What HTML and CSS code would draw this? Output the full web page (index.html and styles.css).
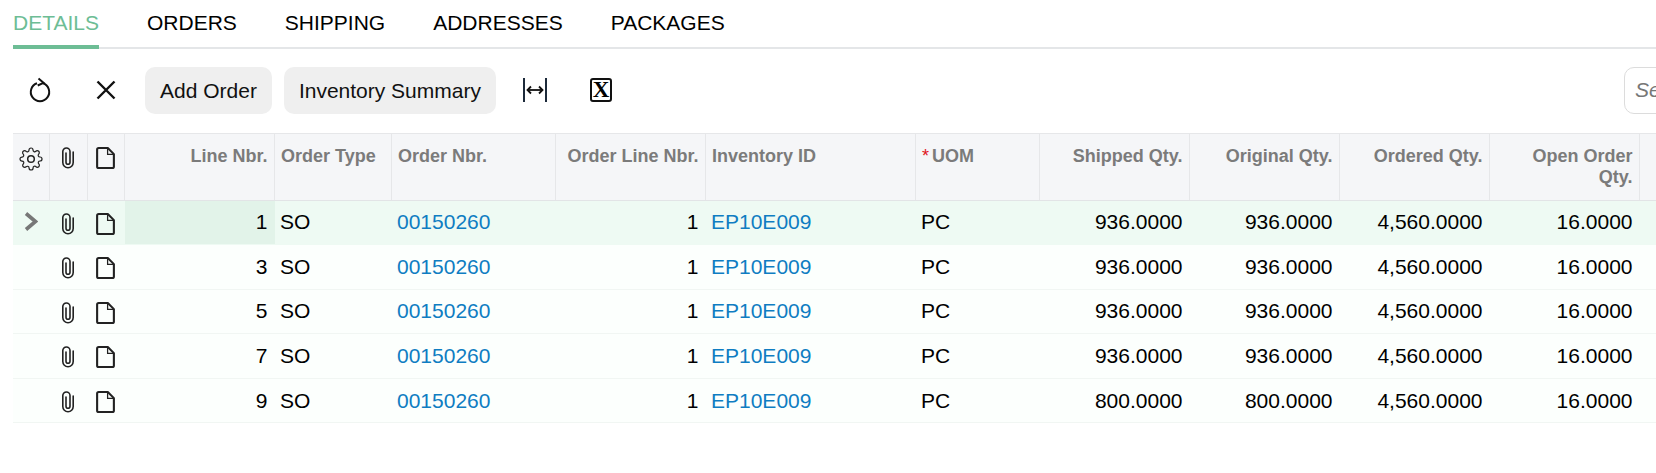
FILE: index.html
```html
<!DOCTYPE html>
<html lang="en">
<head>
  <meta charset="UTF-8">
  <title>Shipment Details</title>
  <link rel="stylesheet" href="styles.css">
</head>
<body>
  <svg class="icon-defs" xmlns="http://www.w3.org/2000/svg">
    <symbol id="i-clip" viewBox="0 0 14 22">
      <path d="M5 6v9.200a2 2 0 0 0 4 0V4.600a3.600 3.600 0 0 0-7.200 0v11a5.200 5.200 0 0 0 10.400 0V5" fill="none" stroke="currentColor" stroke-width="1.600" stroke-linecap="round"/>
    </symbol>
    <symbol id="i-file" viewBox="0 0 18 21">
      <path d="M2.500 1h8.700L17 6.800v11.700a1.500 1.500 0 0 1-1.500 1.500h-13A1.500 1.500 0 0 1 1 18.500V2.500A1.500 1.500 0 0 1 2.500 1z" fill="none" stroke="currentColor" stroke-width="2" stroke-linejoin="round"/>
      <path d="M11 1.500v5.500h5.500" fill="none" stroke="currentColor" stroke-width="1.200"/>
    </symbol>
    <symbol id="i-gear" viewBox="0 0 24 24">
      <circle cx="12" cy="12" r="3.300" fill="none" stroke="currentColor" stroke-width="1.500"/>
      <path d="M19.400 15a1.650 1.650 0 0 0 .33 1.820l.06.06a2 2 0 0 1 0 2.830 2 2 0 0 1-2.830 0l-.06-.06a1.650 1.650 0 0 0-1.820-.33 1.650 1.650 0 0 0-1 1.510V21a2 2 0 0 1-2 2 2 2 0 0 1-2-2v-.09A1.650 1.650 0 0 0 9 19.400a1.650 1.650 0 0 0-1.820.33l-.06.06a2 2 0 0 1-2.830 0 2 2 0 0 1 0-2.830l.06-.06a1.650 1.650 0 0 0 .33-1.820 1.650 1.650 0 0 0-1.510-1H3a2 2 0 0 1-2-2 2 2 0 0 1 2-2h.09A1.650 1.650 0 0 0 4.600 9a1.650 1.650 0 0 0-.33-1.820l-.06-.06a2 2 0 0 1 0-2.830 2 2 0 0 1 2.830 0l.06.06a1.650 1.650 0 0 0 1.820.33H9a1.650 1.650 0 0 0 1-1.510V3a2 2 0 0 1 2-2 2 2 0 0 1 2 2v.09a1.650 1.650 0 0 0 1 1.510 1.650 1.650 0 0 0 1.820-.33l.06-.06a2 2 0 0 1 2.830 0 2 2 0 0 1 0 2.830l-.06.06a1.650 1.650 0 0 0-.33 1.820V9a1.650 1.650 0 0 0 1.510 1H21a2 2 0 0 1 2 2 2 2 0 0 1-2 2h-.09a1.650 1.650 0 0 0-1.510 1z" fill="none" stroke="currentColor" stroke-width="1.200"/>
    </symbol>
  </svg>

  <div class="tabs">
    <div class="tab active">DETAILS</div>
    <div class="tab">ORDERS</div>
    <div class="tab">SHIPPING</div>
    <div class="tab">ADDRESSES</div>
    <div class="tab">PACKAGES</div>
  </div>

  <div class="toolbar">
    <button class="tool-icon">
      <svg width="24" height="26" viewBox="0 0 24 26"><path d="M9 6.300a9.200 9.200 0 1 0 6 0" fill="none" stroke="#111" stroke-width="2"/><path d="M10.500 1.500l5 4.300-5.800 2.700" fill="none" stroke="#111" stroke-width="2"/></svg>
    </button>
    <button class="tool-icon">
      <svg width="20" height="20" viewBox="0 0 20 20"><path d="M1.500 1.500l17 17M18.500 1.500l-17 17" stroke="#111" stroke-width="2.400"/></svg>
    </button>
    <button class="tool-btn">Add Order</button>
    <button class="tool-btn">Inventory Summary</button>
    <button class="tool-icon">
      <svg width="26" height="26" viewBox="0 0 26 26"><path d="M2 1v24M24 1v24" stroke="#1c2a3a" stroke-width="2"/><path d="M6 13h14" stroke="#111" stroke-width="1.800"/><path d="M9 9.500L5.500 13 9 16.500M17 9.500l3.500 3.500-3.500 3.500" fill="none" stroke="#111" stroke-width="1.800"/></svg>
    </button>
    <button class="tool-icon"><span class="excel-mark">X</span></button>
    <input class="search" type="text" placeholder="Search">
  </div>

  <table class="grid">
    <colgroup>
      <col class="c-icon1"><col class="c-icon2"><col class="c-icon3">
      <col class="c-150"><col class="c-type"><col class="c-nbr"><col class="c-150">
      <col class="c-inv"><col class="c-uom"><col class="c-150"><col class="c-150"><col class="c-150"><col class="c-150"><col class="c-end">
    </colgroup>
    <thead>
      <tr>
        <th class="ic"><svg class="gear"><use href="#i-gear"/></svg></th>
        <th class="ic"><svg class="clip"><use href="#i-clip"/></svg></th>
        <th class="ic"><svg class="file"><use href="#i-file"/></svg></th>
        <th class="num">Line Nbr.</th>
        <th>Order Type</th>
        <th>Order Nbr.</th>
        <th class="num">Order Line Nbr.</th>
        <th>Inventory ID</th>
        <th><span class="req">*</span>UOM</th>
        <th class="num">Shipped Qty.</th>
        <th class="num">Original Qty.</th>
        <th class="num">Ordered Qty.</th>
        <th class="num">Open Order Qty.</th>
        <th></th>
      </tr>
    </thead>
    <tbody>
      <tr class="selected">
        <td class="ic"><svg class="chevron" viewBox="0 0 14 20"><path d="M2 2l9.500 8L2 18" fill="none" stroke="#777" stroke-width="3.600"/></svg></td>
        <td class="ic"><svg class="clip"><use href="#i-clip"/></svg></td>
        <td class="ic"><svg class="file"><use href="#i-file"/></svg></td>
        <td class="num active-cell">1</td><td>SO</td><td><a>00150260</a></td><td class="num">1</td><td><a>EP10E009</a></td><td>PC</td>
        <td class="num">936.0000</td><td class="num">936.0000</td><td class="num">4,560.0000</td><td class="num">16.0000</td><td></td>
      </tr>
      <tr>
        <td class="ic"></td>
        <td class="ic"><svg class="clip"><use href="#i-clip"/></svg></td>
        <td class="ic"><svg class="file"><use href="#i-file"/></svg></td>
        <td class="num">3</td><td>SO</td><td><a>00150260</a></td><td class="num">1</td><td><a>EP10E009</a></td><td>PC</td>
        <td class="num">936.0000</td><td class="num">936.0000</td><td class="num">4,560.0000</td><td class="num">16.0000</td><td></td>
      </tr>
      <tr>
        <td class="ic"></td>
        <td class="ic"><svg class="clip"><use href="#i-clip"/></svg></td>
        <td class="ic"><svg class="file"><use href="#i-file"/></svg></td>
        <td class="num">5</td><td>SO</td><td><a>00150260</a></td><td class="num">1</td><td><a>EP10E009</a></td><td>PC</td>
        <td class="num">936.0000</td><td class="num">936.0000</td><td class="num">4,560.0000</td><td class="num">16.0000</td><td></td>
      </tr>
      <tr>
        <td class="ic"></td>
        <td class="ic"><svg class="clip"><use href="#i-clip"/></svg></td>
        <td class="ic"><svg class="file"><use href="#i-file"/></svg></td>
        <td class="num">7</td><td>SO</td><td><a>00150260</a></td><td class="num">1</td><td><a>EP10E009</a></td><td>PC</td>
        <td class="num">936.0000</td><td class="num">936.0000</td><td class="num">4,560.0000</td><td class="num">16.0000</td><td></td>
      </tr>
      <tr>
        <td class="ic"></td>
        <td class="ic"><svg class="clip"><use href="#i-clip"/></svg></td>
        <td class="ic"><svg class="file"><use href="#i-file"/></svg></td>
        <td class="num">9</td><td>SO</td><td><a>00150260</a></td><td class="num">1</td><td><a>EP10E009</a></td><td>PC</td>
        <td class="num">800.0000</td><td class="num">800.0000</td><td class="num">4,560.0000</td><td class="num">16.0000</td><td></td>
      </tr>
    </tbody>
  </table>
</body>
</html>
```

FILE: styles.css
```css
html, body {
  margin: 0;
  padding: 0;
  background: #fff;
  overflow: hidden;
}

body {
  height: 473px;
  font-family: "Liberation Sans", Arial, sans-serif;
  font-size: 21px;
  color: #000;
}

.icon-defs {
  display: none;
}

.tabs {
  display: flex;
  gap: 48px;
  height: 47px;
  margin-left: 13px;
  border-bottom: 2px solid #e4e6e8;
}

.tab {
  height: 49px;
  line-height: 46px;
  box-sizing: border-box;
  white-space: nowrap;
}

.tab.active {
  color: #6dbd95;
  border-bottom: 4px solid #6dbd95;
  border-radius: 3px 3px 0 0;
}

.toolbar {
  display: flex;
  align-items: center;
  gap: 12px;
  padding: 17.500px 0 0 13px;
  height: 47.500px;
  overflow: hidden;
}

.tool-icon {
  flex: none;
  display: flex;
  align-items: center;
  justify-content: center;
  width: 54px;
  height: 47px;
  padding: 0;
  border: none;
  background: none;
}

.tool-btn {
  flex: none;
  height: 47.500px;
  padding: 2px 15px 0;
  border: none;
  border-radius: 10px;
  background: #efefef;
  font-family: inherit;
  font-size: 21px;
  color: #111;
}

.excel-mark {
  display: block;
  box-sizing: border-box;
  width: 22px;
  height: 24px;
  border: 2px solid #111;
  border-radius: 3px;
  font-family: "Liberation Serif", serif;
  font-weight: bold;
  font-size: 23px;
  line-height: 20px;
  text-align: center;
  color: #000;
}

.search {
  flex: none;
  box-sizing: border-box;
  width: 240px;
  height: 47.500px;
  margin-left: 984px;
  padding: 0 10px;
  border: 1px solid #dcdcdc;
  border-radius: 10px;
  font-family: inherit;
  font-size: 21px;
}

.search::placeholder {
  color: #777;
  font-style: italic;
}

.grid {
  table-layout: fixed;
  width: 1643px;
  margin: 18.500px 0 0 13px;
  border-collapse: collapse;
}

.c-icon1 { width: 36.500px; }
.c-icon2 { width: 38px; }
.c-icon3 { width: 37px; }
.c-150 { width: 150px; }
.c-type { width: 117px; }
.c-nbr { width: 164px; }
.c-inv { width: 210px; }
.c-uom { width: 124px; }
.c-end { width: 16.500px; }

th {
  height: 67px;
  box-sizing: border-box;
  padding: 12px 6.500px 0 6px;
  vertical-align: top;
  text-align: left;
  background: #f5f6f8;
  border-top: 1px solid #e6e7e9;
  border-bottom: 1px solid #e2e4e6;
  border-right: 1px solid #e6e7e9;
  font-size: 18px;
  line-height: 21px;
  color: #7b7b7b;
}

th.ic {
  padding: 13px 0 0;
  text-align: center;
  color: #222;
}

td {
  height: 44.600px;
  box-sizing: border-box;
  padding: 0 7px 0 5.500px;
  background: #fcfffd;
  border-bottom: 1px solid #f1f6f3;
  white-space: nowrap;
}

td.ic {
  padding: 0;
  text-align: center;
  color: #222;
}

.num {
  text-align: right;
}

th.num {
  padding-left: 8px;
  text-align: right;
}

.selected td {
  background: #eefaf3;
  border-bottom-color: #eefaf3;
}

.selected td.active-cell {
  background: #e2f3e9;
}

a {
  color: #0f7dc2;
}

.req {
  margin-right: 3px;
  color: #e0141c;
  font-weight: normal;
}

svg {
  vertical-align: middle;
}

.gear {
  width: 24px;
  height: 24px;
}

.clip {
  width: 14px;
  height: 22px;
  margin-right: 2px;
}

.file {
  width: 19px;
  height: 22px;
  margin-right: 2px;
}

.chevron {
  width: 14px;
  height: 21px;
  margin-bottom: 3px;
}
```
